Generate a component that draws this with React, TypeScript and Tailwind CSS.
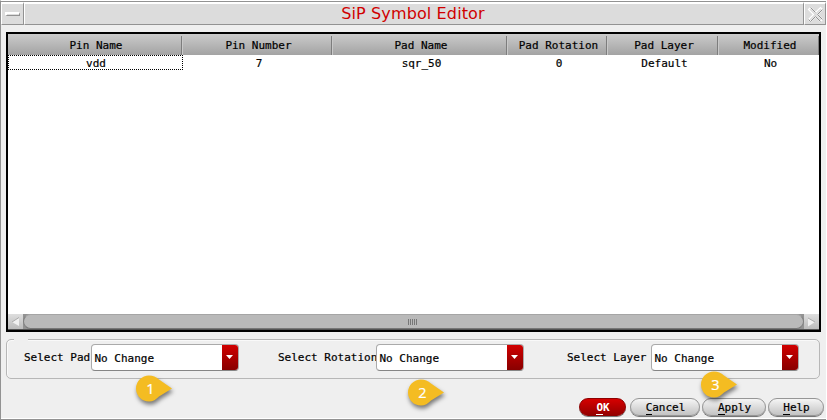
import React from "react";

const columns = [
  { name: "Pin Name", value: "vdd", width: "w-[175px]" },
  { name: "Pin Number", value: "7", width: "w-[150px]" },
  { name: "Pad Name", value: "sqr_50", width: "w-[175px]" },
  { name: "Pad Rotation", value: "0", width: "w-[100px]" },
  { name: "Pad Layer", value: "Default", width: "w-[111px]" },
  { name: "Modified", value: "No", width: "w-[101px]" },
];

function TitleBar() {
  return (
    <div className="flex h-[24px] w-[825px] shrink-0 border-t border-[#929292] bg-[#dcdcdc]">
      <div className="flex w-[23px] items-center justify-center border-t-2 border-r border-b border-l border-t-white border-r-[#929292] border-b-[#929292] border-l-white">
        <div className="h-[4px] w-[15px] border-t-2 border-r border-b border-l-2 border-t-white border-r-[#929292] border-b-[#929292] border-l-white" />
      </div>
      <div className="flex flex-1 border-t-2 border-r border-b border-l border-t-white border-r-[#929292] border-b-[#929292] border-l-white">
        <h1 className="w-[776px] text-center font-['DejaVu_Sans',sans-serif] text-[16px] leading-[20px] tracking-[0.12px] text-[#d00000] [-webkit-text-stroke:0]">
          SiP Symbol Editor
        </h1>
      </div>
      <div className="w-[22px] border-t-2 border-r border-b border-l border-t-white border-r-[#929292] border-b-[#929292] border-l-white">
        <svg width="20" height="20" viewBox="0 0 20 20" fill="none">
          <path d="M3.5 5.5 5.5 3.5 10.5 8.5 15.5 3.5 17.5 5.5 12.5 10.5 17.5 15.5 15.5 17.5 10.5 12.5 5.5 17.5 3.5 15.5 8.5 10.5Z" stroke="#fff" strokeWidth="1.2" />
          <path d="M17.5 5.5 12.5 10.5 17.5 15.5M15.5 17.5 10.5 12.5 5.5 17.5 3.5 15.5M5.5 3.5 10.5 8.5" stroke="#929292" />
        </svg>
      </div>
    </div>
  );
}

function Arrow({ right = false }: { right?: boolean }) {
  return (
    <div className="flex h-[15px] w-[15px] items-center justify-center bg-linear-to-b from-[#dedede] to-[#bcbcbc]">
      <svg width="9" height="10" viewBox="0 0 9 10" className={right ? "rotate-180" : ""}>
        <path d="M8 .5v8.5L1 5Z" fill="#f0f0f0" />
        <path d={right ? "M8 9 1 5" : "M8 .5 1 5"} stroke="#aaa" fill="none" />
      </svg>
    </div>
  );
}

function PinTable() {
  return (
    <div className="ml-[5px] flex h-[300px] w-[815px] shrink-0 flex-col border-2 border-black bg-white">
      <div className="flex h-[21px] shrink-0 overflow-hidden bg-linear-to-b from-[#cbcbcb] to-[#a3a3a3]">
        {columns.map((c) => (
          <div key={c.name} className={`${c.width} relative flex shrink-0 justify-center pt-[4px] pl-px`}>
            <span className="leading-[16px]">{c.name}</span>
            <i className="absolute right-0 bottom-0 h-[19px] w-[2px] border-r border-l border-r-[#c9c9c9] border-l-[#7d7d7d]" />
          </div>
        ))}
      </div>
      <div className="flex h-[15px] shrink-0 overflow-hidden">
        {columns.map((c, i) => (
          <div
            key={c.name}
            className={`${c.width} flex shrink-0 items-center justify-center pt-[2px] ${i === 0 ? "pl-px outline outline-dotted -outline-offset-1 outline-black" : "pl-[2px]"}`}
          >
            {c.value}
          </div>
        ))}
      </div>
      <div className="mt-auto flex h-[16px] border-b border-[#555] bg-[#929292]">
        <Arrow />
        <div className="flex h-[15px] flex-1 items-center justify-center rounded-full border border-t-[#a5a5a5] border-r-[#808080] border-b-[#777] border-l-[#808080] bg-[#b9b9b9]">
          <div className="mr-[2px] flex h-[6px] gap-px">
            {[0, 1, 2, 3, 4].map((n) => (
              <i key={n} className="w-px bg-[#777]" />
            ))}
          </div>
        </div>
        <Arrow right />
      </div>
    </div>
  );
}

function Combo() {
  return (
    <div className="flex h-[27px] w-[148px] shrink-0 overflow-hidden rounded-[4px] border border-[#aaa] border-b-[#858585] bg-white">
      <span className="flex-1 pt-[6px] pl-[2.5px] leading-[16px]">No Change</span>
      <div className="flex w-[16px] items-center justify-center bg-linear-to-b from-[#d10000] to-[#880000] pr-px pb-px">
        <svg width="7" height="4" viewBox="0 0 7 4">
          <path d="M0 0h7L3.5 4Z" fill="white" />
        </svg>
      </div>
    </div>
  );
}

function Field({ label, width }: { label: string; width: string }) {
  return (
    <div className="flex">
      <span className={`${width} shrink-0 pt-[6px] leading-[16px] whitespace-nowrap`}>{label}</span>
      <Combo />
    </div>
  );
}

function PushButton({ label, size, primary = false }: { label: string; size: string; primary?: boolean }) {
  return (
    <button
      className={`${size} flex h-[18px] shrink-0 items-center justify-center rounded-full border leading-[14px] shadow-[0_1px_0_#777] ${
        primary
          ? "border-[#8e0000] bg-linear-to-b from-[#d60000] to-[#950000] font-bold text-white [-webkit-text-stroke:0]"
          : "border-[#969696] bg-linear-to-b from-[#f5f5f5] to-[#c3c3c3]"
      }`}
    >
      <span className="inline-flex pt-[2px] pl-px">
        <span className="h-[14px] border-b border-current">{label[0]}</span>
        {label.slice(1)}
      </span>
    </button>
  );
}

function Marker({ n, place }: { n: number; place: string }) {
  return (
    <div className={`${place} absolute h-[27px] w-[38px]`}>
      <svg className="absolute inset-0 overflow-visible drop-shadow-[1px_3px_2px_rgba(0,0,0,0.5)]" width="38" height="27" viewBox="0 0 38 27">
        <path d="M13 .5C17 .5 20 2 23 4.5L36 13.5 23 21.5C20 24.5 17 26.5 13 26.5A13 13 0 0 1 13 .5Z" fill="#f4bc22" />
      </svg>
      <span className="relative block w-[29px] text-center font-['Open_Sans',sans-serif] text-[14.5px] leading-[28px] text-white [-webkit-text-stroke:0.2px_white]">{n}</span>
    </div>
  );
}

export default function App() {
  return (
    <main className="relative flex h-[420px] w-[827px] flex-col overflow-hidden border-t border-r border-l border-t-white border-r-white border-l-[#929292] bg-[#efefef] font-['DejaVu_Sans_Mono',monospace] text-[11px] leading-[15px] text-black [-webkit-text-stroke:0.2px]">
      <TitleBar />
      <div className="h-[7px] shrink-0" />
      <PinTable />
      <div className="relative mt-[7px] ml-[5px] flex h-[40px] w-[814px] shrink-0 rounded-[5px] border border-[#b7b7b7] pt-[4px] pl-[17px] shadow-[inset_1px_1px_0_#f9f9f9]">
        <i className="absolute -top-px left-[7px] h-[2px] w-[14px] bg-[#efefef]" />
        <Field label="Select Pad" width="w-[67px]" />
        <div className="w-[39px] shrink-0" />
        <Field label="Select Rotation" width="w-[98px]" />
        <div className="w-[43px] shrink-0" />
        <Field label="Select Layer" width="w-[84px]" />
      </div>
      <div className="mt-[19px] ml-[578px] flex shrink-0">
        <PushButton label="OK" size="w-[47px] mr-[4px]" primary />
        <PushButton label="Cancel" size="w-[70px] mr-[2px]" />
        <PushButton label="Apply" size="w-[64px] mr-[2px]" />
        <PushButton label="Help" size="w-[56px]" />
      </div>
      <div className="mt-auto h-[2px] shrink-0 border-t border-b border-t-white border-b-[#929292]" />
      <Marker n={1} place="left-[135px] top-[374px]" />
      <Marker n={2} place="left-[407px] top-[378px]" />
      <Marker n={3} place="left-[700px] top-[370px]" />
    </main>
  );
}
